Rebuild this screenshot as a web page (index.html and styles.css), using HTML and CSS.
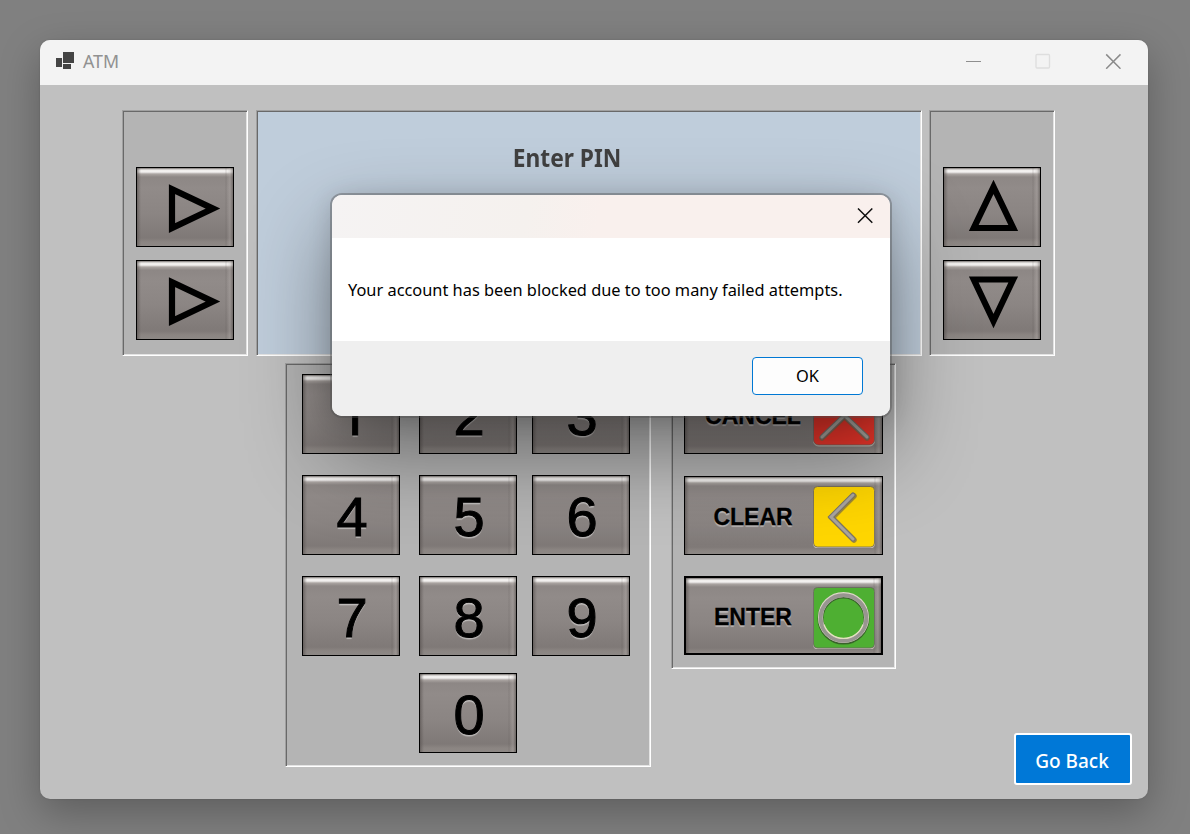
FILE: index.html
```
<!DOCTYPE html>
<html lang="en">
<head>
<meta charset="utf-8">
<title>ATM</title>
<link rel="stylesheet" href="styles.css">
</head>
<body>
<main class="window">
  <header class="titlebar">
    <svg class="app-icon" width="20" height="18" viewBox="0 0 20 18"><path fill="#444" d="M1 6h6v9H1zM8 0h11v11H8zM8 12h8v5H8z"/></svg>
    <span class="app-name">ATM</span>
    <div class="controls">
      <svg width="16" height="16" viewBox="0 0 16 16"><path d="M1 8.5h15" stroke="#8e8e8e" fill="none"/></svg>
      <svg width="16" height="16" viewBox="0 0 16 16"><rect x="1" y="1.5" width="13.5" height="13.5" rx="1" stroke="#dedede" stroke-width="1.3" fill="none"/></svg>
      <svg width="16" height="16" viewBox="0 0 16 16"><path d="M1.2 1.4l14.3 14.3M15.5 1.4L1.2 15.7" stroke="#8a8a8a" stroke-width="1.5" fill="none"/></svg>
    </div>
  </header>

  <div class="machine">
    <section class="upper">
      <div class="panel side">
        <button class="key"><svg width="96" height="78" viewBox="0 0 96 78"><path class="tri" d="M35 21.2V60L76 40.6z"/></svg></button>
        <button class="key"><svg width="96" height="78" viewBox="0 0 96 78"><path class="tri" d="M35 21.2V60L76 40.6z"/></svg></button>
      </div>
      <div class="panel screen"><h1 class="prompt">Enter PIN</h1></div>
      <div class="panel side right">
        <button class="key"><svg width="96" height="78" viewBox="0 0 96 78"><path class="tri" d="M29.8 60H69.2L49.5 19z"/></svg></button>
        <button class="key"><svg width="96" height="78" viewBox="0 0 96 78"><path class="tri" d="M29.8 18.5H69.2L49.5 60z"/></svg></button>
      </div>
    </section>

    <section class="lower">
      <div class="panel keypad">
        <button class="key digit one">1</button><button class="key digit">2</button><button class="key digit">3</button>
        <button class="key digit">4</button><button class="key digit">5</button><button class="key digit">6</button>
        <button class="key digit">7</button><button class="key digit">8</button><button class="key digit">9</button>
        <button class="key digit zero">0</button>
      </div>
      <div class="panel actions">
        <button class="key action"><span class="label">CANCEL</span>
          <svg class="tile" width="62" height="62" viewBox="0 0 62 62"><rect class="face red" x=".5" y="0" width="61" height="60" rx="5"/><path class="groove" d="M9 10l45 43M54 10L9 53"/><path class="bar" d="M9 9l45 43M54 9L9 52"/><path class="glint" d="M9 9l45 43M54 9L9 52"/></svg>
        </button>
        <button class="key action"><span class="label">CLEAR</span>
          <svg class="tile" width="62" height="62" viewBox="0 0 62 62"><rect class="face yellow" x=".5" y=".5" width="61" height="60.5" rx="4"/><path class="groove" d="M41 10L19 32L41 54"/><path class="bar" d="M40 9L18 31L40 53"/><path class="glint" d="M40 9L18 31L40 53"/></svg>
        </button>
        <button class="key action default"><span class="label">ENTER</span>
          <svg class="tile" width="62" height="62" viewBox="0 0 62 62"><rect class="face green" x=".5" y=".5" width="61" height="60.5" rx="4"/><circle class="ring-shade" cx="30.5" cy="31.6" r="23"/><circle class="ring-light" cx="30.5" cy="30.4" r="23"/><circle class="ring" cx="30.5" cy="31" r="22.8"/><path class="ring-glint" d="M11 37.5A20.6 20.6 0 0 0 50 37.5"/></svg>
        </button>
      </div>
      <button class="back">Go Back</button>
    </section>
  </div>
</main>

<div class="dialog" role="alertdialog">
  <div class="dialog-title"><svg width="16" height="16" viewBox="0 0 16 16"><path d="M1 .5l14.3 14.3M15.3 .5L1 14.8" stroke="#111" stroke-width="1.5" fill="none"/></svg></div>
  <div class="dialog-body"><p class="message">Your account has been blocked due to too many failed attempts.</p></div>
  <div class="dialog-footer"><button class="ok">OK</button></div>
</div>
</body>
</html>
```

FILE: styles.css
```
* { box-sizing: border-box; }
body {
  margin: 0;
  width: 1190px;
  height: 834px;
  padding: 40px;
  overflow: hidden;
  position: relative;
  background: #808080;
  font-family: "Noto Sans", "Open Sans", sans-serif;
}
button { font: inherit; margin: 0; padding: 0; }
svg { display: block; }

.window {
  width: 1108px;
  height: 759px;
  border-radius: 10px;
  overflow: hidden;
  background: #c0c0c0;
  box-shadow: 0 0 2px rgba(0,0,0,.15), 0 14px 40px rgba(0,0,0,.27);
}
.titlebar {
  height: 45px;
  display: flex;
  align-items: center;
  padding: 0 27px 0 15px;
  background: #f3f3f3;
}
.app-icon { margin-bottom: 3px; }
.app-name { margin-left: 8px; font-size: 17.8px; letter-spacing: 0; color: #919191; padding-bottom: 3px; }
.controls { margin-left: auto; display: flex; gap: 54px; padding-bottom: 3px; }

.machine { padding: 25px 16px 0 82px; }
.upper { display: flex; gap: 8px; height: 246px; }
.panel {
  background: #b4b4b4;
  border: 1px solid;
  border-color: #a0a0a0 #fff #fff #a0a0a0;
  box-shadow: inset 1px 1px #696969, inset -1px -1px #e3e3e3;
}
.side {
  width: 126px;
  padding: 56px 0 0 13px;
  display: flex;
  flex-direction: column;
  gap: 13px;
}
.right { margin-left: -1px; }
.screen { width: 666px; background: #bfcddb; }
.prompt {
  margin: 29px 44px 0 0;
  text-align: center;
  font-size: 25px;
  line-height: 34px;
  font-weight: 700;
  color: #404040;
  transform: scaleX(.91);
}

.key {
  width: 98px;
  height: 80px;
  border: 1px solid #000;
  background:
    linear-gradient(to right, rgba(90,84,82,.7) 0, rgba(90,84,82,.3) 2px, transparent 4px, transparent calc(100% - 8px), rgba(90,84,82,.2) calc(100% - 7px), transparent calc(100% - 6px), rgba(190,183,180,.3) calc(100% - 3px), rgba(80,75,72,.5) 100%),
    linear-gradient(#777270 0, #efedeb 2px, #f3f1f0 4px, #aaa4a1 6px, #8d8785 9px, #918b89 20px, #8b8583 45px, #7f7977 70px, #8b8582 74px, #8d8885 100%);
}
.tri { fill: none; stroke: #000; stroke-width: 6.2; stroke-miterlimit: 8; }
.digit {
  font: 56px/78px "Liberation Sans", Arial, sans-serif;
  color: #000;
  -webkit-text-stroke: 1px #000;
  text-shadow: 0 1.5px 1px rgba(255,255,255,.45);
  padding: 2px 0 0 2px;
  overflow: hidden;
}
.one { font-family: Roboto, sans-serif; padding-left: 5px; }

.lower { margin-top: 7px; padding-left: 163px; display: flex; gap: 20px; height: 422px; }
.keypad {
  width: 366px;
  height: 404px;
  padding: 10px 0 0 16px;
  display: grid;
  grid-template-columns: 102px 98px 98px;
  grid-template-rows: 80px 80px 80px 80px;
  column-gap: 15px;
  row-gap: 21px;
  align-content: start;
}
.zero { grid-column: 2; margin-top: -4px; }
.actions {
  width: 225px;
  height: 306px;
  padding: 11px 0 0 12px;
  display: flex;
  flex-direction: column;
  gap: 22px;
}
.action {
  width: 199px;
  height: 79px;
  display: flex;
  align-items: center;
}
.default { border-width: 2px; margin-top: -1px; }
.label {
  width: 136px;
  margin-right: -8px;
  padding-top: 2px;
  font: 700 23px/24px "Liberation Sans", Arial, sans-serif;
  color: #000;
  text-align: center;
  -webkit-text-stroke: .3px #000;
  text-shadow: 0 1.5px 1px rgba(255,255,255,.4);
}
.default .label { margin-left: -1px; }
.tile { margin-top: 3px; }
.default .tile { margin-top: 5px; }
.face { stroke: #69645f; stroke-opacity: .8; stroke-width: 1; filter: drop-shadow(0 1px 0 #c9c2b8); }
.red { fill: #ee362b; }
.yellow { fill: #ffd600; }
.green { fill: #4eaf32; }
.groove, .bar, .glint { fill: none; stroke-linecap: round; stroke-linejoin: miter; }
.groove { stroke: #786a4a; stroke-width: 5.5; opacity: .7; }
.bar { stroke: #77736e; stroke-width: 5; }
.glint { stroke: #aaa59e; stroke-width: 3; }
.ring, .ring-shade, .ring-light, .ring-glint { fill: none; }
.ring { stroke: #989590; stroke-width: 4; }
.ring-shade { stroke: #39632b; stroke-width: 6; }
.ring-light { stroke: #ddd8c7; stroke-width: 5; }
.ring-glint { stroke: #e2e0bf; stroke-width: 1.3; }

.back {
  width: 118px;
  height: 52px;
  margin-left: auto;
  align-self: flex-end;
  border: 2px solid #fff;
  border-radius: 3px;
  background: #0078d7;
  color: #fff;
  font-size: 19px;
  font-weight: 500;
  padding: 3px 2px 0 0;
  white-space: nowrap;
}

.dialog {
  position: absolute;
  left: 332px;
  top: 195px;
  width: 558px;
  height: 221px;
  border-radius: 10px;
  background: #fff;
  box-shadow: 0 0 0 2px rgba(80,80,80,.4), 0 36px 84px rgba(0,0,0,.42), 0 2px 24px rgba(0,0,0,.15);
  display: flex;
  flex-direction: column;
}
.dialog-title {
  height: 43px;
  padding: 13px 17px 0 0;
  display: flex;
  justify-content: flex-end;
  border-radius: 10px 10px 0 0;
  background: linear-gradient(100deg, #f5f3f3 0, #f5f1ee 35%, #f9f0ed 48%, #f9f0ed 100%);
}
.dialog-body { height: 103px; padding: 40px 0 0 16px; }
.message { margin: 0; font-size: 16.37px; line-height: 24px; color: #000; white-space: nowrap; }
.dialog-footer {
  height: 75px;
  padding: 16px 27px 0 0;
  display: flex;
  justify-content: flex-end;
  background: #efefef;
  border-radius: 0 0 10px 10px;
}
.ok {
  width: 111px;
  height: 38px;
  padding-bottom: 2px;
  border: 1px solid #0078d4;
  border-radius: 4px;
  background: #fdfdfd;
  color: #000;
  font-size: 16.4px;
}
```
